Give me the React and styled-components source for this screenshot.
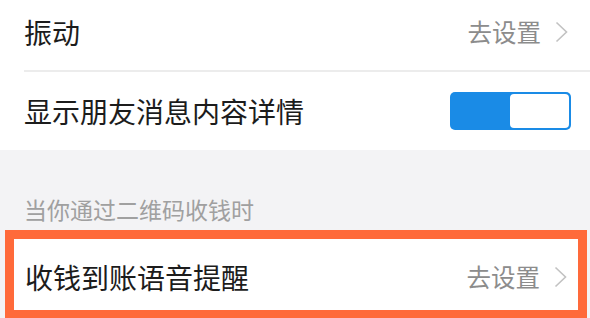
import React from "react";
import styled, { createGlobalStyle } from "styled-components";

const GlobalStyle = createGlobalStyle`
  html, body {
    margin: 0;
    padding: 0;
    background: #ffffff;
    font-family: "Noto Sans CJK SC", "Noto Sans", sans-serif;
  }
`;

const Page = styled.div`
  width: 590px;
  height: 318px;
  overflow: hidden;
  background: #f3f3f5;
`;

const Group = styled.div`
  background: #ffffff;
`;

const Row = styled.div`
  display: flex;
  align-items: center;
  justify-content: space-between;
  height: ${(p) => p.$height}px;
  padding: ${(p) => p.$pad || "0 22px 0 24px"};
  box-sizing: border-box;
`;

const Label = styled.div`
  font-size: 28px;
  color: #1c1c1c;
`;

const Divider = styled.div`
  height: 2px;
  margin-left: 24px;
  background: #ececec;
`;

const Action = styled.div`
  display: flex;
  align-items: center;
  gap: 14px;
  font-size: 24.5px;
  color: #8c8c8c;
`;

const Chevron = styled.svg`
  width: 13px;
  height: 22px;
`;

const Toggle = styled.div`
  display: flex;
  width: 121px;
  height: 38px;
  border-radius: 5px;
  background: #1a8be6;
  padding: 2px;
  box-sizing: border-box;
  justify-content: flex-end;
`;

const Knob = styled.div`
  width: 59px;
  height: 100%;
  border-radius: 4px;
  background: #ffffff;
`;

const SectionHeader = styled.div`
  padding: 44px 0 0 24px;
  height: 80px;
  box-sizing: border-box;
  font-size: 23px;
  line-height: 30px;
  color: #a0a0a0;
`;

const Highlight = styled.div`
  margin: 0 3px 0 5px;
  border: 9px solid #ff6a3a;
  background: #ffffff;
`;

function Arrow() {
  return (
    <Chevron viewBox="0 0 13 22">
      <polyline
        points="1.5,1.5 11.5,11 1.5,20.5"
        fill="none"
        stroke="#c2c2c2"
        strokeWidth="1.6"
      />
    </Chevron>
  );
}

export default function App() {
  return (
    <Page>
      <GlobalStyle />
      <Group>
        <Row $height={70} $pad="0 22px 7px 24px">
          <Label>振动</Label>
          <Action>
            去设置
            <Arrow />
          </Action>
        </Row>
        <Divider />
        <Row $height={78} $pad="0 19px 0 24px">
          <Label>显示朋友消息内容详情</Label>
          <Toggle>
            <Knob />
          </Toggle>
        </Row>
      </Group>
      <SectionHeader>当你通过二维码收钱时</SectionHeader>
      <Highlight>
        <Row $height={71} $pad="4px 11px 0 11px">
          <Label>收钱到账语音提醒</Label>
          <Action>
            去设置
            <Arrow />
          </Action>
        </Row>
      </Highlight>
    </Page>
  );
}
